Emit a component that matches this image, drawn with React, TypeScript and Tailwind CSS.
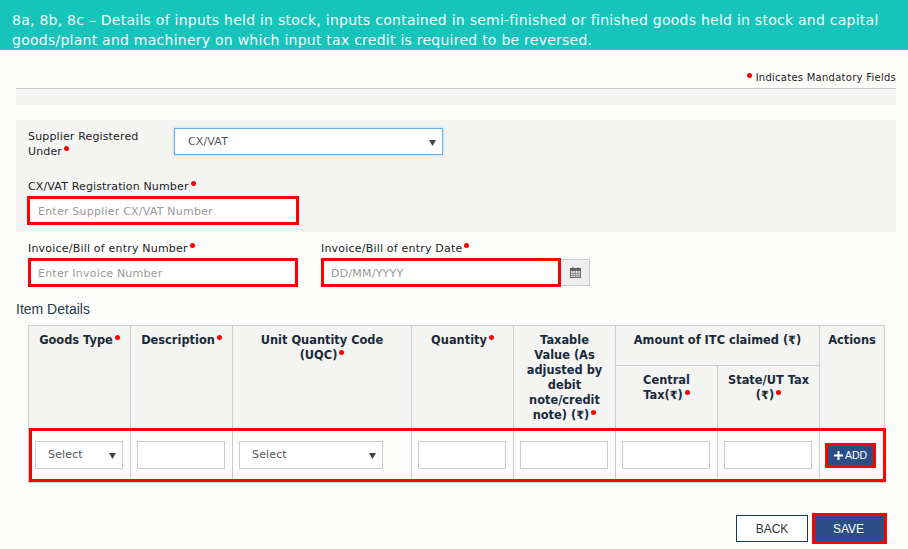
import React from "react";

const Dot = () => (
  <span className="inline-block w-[5px] h-[5px] rounded-full bg-[#ff0000] ml-[2px] align-[4px]" />
);

const Arrow = () => (
  <svg width="7" height="7" viewBox="0 0 7 7" className="shrink-0">
    <path d="M0 1h7L3.5 7z" fill="#444" />
  </svg>
);

const Field = ({ w, placeholder }: { w: string; placeholder: string }) => (
  <input
    readOnly
    placeholder={placeholder}
    className={`${w} h-[29px] border-[3px] border-[#ff0000] pt-[1px] bg-white text-[11px] tracking-[0.22px] outline-none placeholder:text-[#999]`}
  />
);

const Plain = () => (
  <input readOnly className="block w-[88px] h-[28px] border border-[#ccc] bg-white outline-none" />
);

const Select = ({ w }: { w: string }) => (
  <div className={`${w} h-[28px] border border-[#ccc] bg-white flex items-center justify-between pl-[12px] pr-[6px] pt-[1px] text-[11px] tracking-[0.15px] text-[#555]`}>
    <span>Select</span>
    <Arrow />
  </div>
);

const th = "border border-[#ccc] bg-[#f4f5f3] align-top text-center font-bold text-[11.4px] leading-[15px] text-[#1a2a3a] px-[6px] pt-[7px]";
const td = "border border-[#ccc] align-middle px-[6px] pb-[2px] h-[54px]";

export default function App() {
  return (
    <div className="w-[908px] h-[549px] overflow-hidden bg-[#fdfefc] text-[#333] text-[11px] font-['DejaVu_Sans','Noto_Sans',sans-serif]">
      <div className="h-[50px] bg-[#17c4bb] text-[#f4fffd] text-[14px] leading-[20px] px-[12px] pt-[10px] tracking-[0.25px]">
        8a, 8b, 8c – Details of inputs held in stock, inputs contained in semi-finished or finished goods held in stock and capital goods/plant and machinery on which input tax credit is required to be reversed.
      </div>

      <div className="px-[16px] w-[912px]">
        <div className="w-[880px]">
          <div className="h-[39px] border-b border-[#ccc] flex items-end justify-end pb-[4px] text-[10px] leading-[12px] tracking-[0.26px] text-[#222]">
            <span className="inline-block w-[5px] h-[5px] rounded-full bg-[#ff0000] mr-[4px] mb-[6px]" />
            Indicates Mandatory Fields
          </div>
          <div className="h-[16px] bg-[#f4f5f3]" />

          <div className="mt-[15px] h-[112px] bg-[#f4f5f3] px-[12px] pt-[8px] tracking-[0.15px]">
            <div className="flex">
              <div className="w-[146px] pt-[1px] leading-[15px] text-[#222]">
                Supplier Registered
                <br />
                Under<Dot />
              </div>
              <div className="w-[269px] h-[27px] border border-[#66afe9] bg-white flex items-center justify-between pl-[13px] pr-[6px] pt-[2px] text-[#555] shadow-[0_0_3px_rgba(102,175,233,0.5)]">
                <span>CX/VAT</span>
                <Arrow />
              </div>
            </div>
            <div className="mt-[20px] leading-[15px] text-[#222]">
              CX/VAT Registration Number<Dot />
            </div>
            <div className="-ml-[1px] mt-[2px]">
              <Field w="w-[272px] pl-[8px]" placeholder="Enter Supplier CX/VAT Number" />
            </div>
          </div>

          <div className="flex pl-[12px] mt-[9px] tracking-[0.2px]">
            <div className="w-[293px]">
              <div className="leading-[15px] text-[#222] h-[17px]">
                Invoice/Bill of entry Number<Dot />
              </div>
              <Field w="w-[270px] pl-[7px]" placeholder="Enter Invoice Number" />
            </div>
            <div>
              <div className="leading-[15px] text-[#222] h-[17px]">
                Invoice/Bill of entry Date<Dot />
              </div>
              <div className="flex items-start">
                <Field w="w-[240px] pl-[7px]" placeholder="DD/MM/YYYY" />
                <div className="w-[29px] h-[27px] mt-[1px] bg-[#eeeeee] border border-[#ccc] border-l-0 flex items-center justify-center">
                  <svg width="11" height="11" viewBox="0 0 11 11">
                    <rect x="0.5" y="1.5" width="10" height="9" fill="#e4e4e4" stroke="#666" />
                    <rect x="0.5" y="1.5" width="10" height="2.5" fill="#666" />
                    <path d="M3 0v2M8 0v2" stroke="#555" />
                    <path d="M0 6.5h11M0 8.5h11M3 4v7M5.5 4v7M8 4v7" stroke="#777" strokeWidth="0.7" />
                  </svg>
                </div>
              </div>
            </div>
          </div>

          <div className="mt-[14px] text-[14px] leading-[16px] text-[#2a3a4a] font-['Liberation_Sans',sans-serif]">
            Item Details
          </div>

          <div className="relative ml-[12px] mt-[8px] w-[857px]">
            <table className="table-fixed border-collapse w-[856px]">
              <colgroup>
                <col className="w-[102px]" />
                <col className="w-[102px]" />
                <col className="w-[179px]" />
                <col className="w-[102px]" />
                <col className="w-[102px]" />
                <col className="w-[102px]" />
                <col className="w-[102px]" />
                <col className="w-[65px]" />
              </colgroup>
              <thead>
                <tr className="h-[40px]">
                  <th rowSpan={2} className={th}>Goods Type<Dot /></th>
                  <th rowSpan={2} className={th}>Description<Dot /></th>
                  <th rowSpan={2} className={th}>Unit Quantity Code<br />(UQC)<Dot /></th>
                  <th rowSpan={2} className={th}>Quantity<Dot /></th>
                  <th rowSpan={2} className={th}>Taxable<br />Value (As<br />adjusted by<br />debit<br />note/credit<br />note) (₹)<Dot /></th>
                  <th colSpan={2} className={th}>Amount of ITC claimed (₹)</th>
                  <th rowSpan={2} className={`${th} !px-0`}>Actions</th>
                </tr>
                <tr className="h-[63px]">
                  <th className={th}>Central Tax(₹)<Dot /></th>
                  <th className={th}>State/UT Tax (₹)<Dot /></th>
                </tr>
              </thead>
              <tbody>
                <tr>
                  <td className={td}><Select w="w-[88px]" /></td>
                  <td className={td}><Plain /></td>
                  <td className={td}><Select w="w-[144px]" /></td>
                  <td className={td}><Plain /></td>
                  <td className={td}><Plain /></td>
                  <td className={td}><Plain /></td>
                  <td className={td}><Plain /></td>
                  <td className={`${td} !px-[5px] !pb-0`}>
                    <div className="w-[51px] h-[25px] border-[3px] border-[#ff0000] bg-[#2c4e86] text-white text-[10.5px] font-['Liberation_Sans',sans-serif] flex items-center justify-center gap-[2px]">
                      <svg width="9" height="9" viewBox="0 0 9 9"><path d="M3.5 0h2v3.5H9v2H5.500v3.500h-2V5.500H0v-2h3.500z" fill="#fff" /></svg>
                      ADD
                    </div>
                  </td>
                </tr>
              </tbody>
            </table>
            <div className="absolute left-[1px] top-[103px] w-[857px] h-[54px] border-[3px] border-[#ff0000] pointer-events-none" />
          </div>

          <div className="flex justify-end items-start gap-[4px] mt-[30px] pr-[9px] font-['Liberation_Sans',sans-serif] text-[12px]">
            <div className="w-[72px] h-[27px] mt-[2px] border border-[#1a3a5a] bg-white text-[#333] flex items-center justify-center">BACK</div>
            <div className="w-[75px] h-[31px] border-[3px] border-[#ff0000] bg-[#2c4e86] text-white flex items-center justify-center pr-[2px]">SAVE</div>
          </div>
        </div>
      </div>
    </div>
  );
}
